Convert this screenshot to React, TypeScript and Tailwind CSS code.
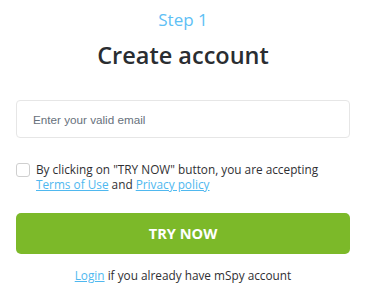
import { useState } from "react";

export default function App() {
  const [email, setEmail] = useState("");
  const [agree, setAgree] = useState(false);

  return (
    <div className="w-[367px] h-[303px] bg-white pl-4 pr-[17px] pt-2 flex flex-col font-['Open_Sans',sans-serif]">
      <p className="text-center text-[17px] leading-[24px] text-[#5ec0f5]">Step 1</p>
      <h1 className="mt-[7px] text-center text-[23.5px] leading-[32px] font-semibold text-[#2a2d31]">
        Create account
      </h1>

      <input
        type="email"
        value={email}
        onChange={(e) => setEmail(e.target.value)}
        placeholder="Enter your valid email"
        className="mt-[29px] h-[38px] w-full rounded border border-[#e6e6e6] px-4 text-[11.7px] font-['Liberation_Sans',Arial,sans-serif] text-[#333] placeholder:text-[#67717c] outline-none"
      />

      <label className="mt-[24px] flex items-start gap-[6px] cursor-pointer">
        <input
          type="checkbox"
          checked={agree}
          onChange={(e) => setAgree(e.target.checked)}
          className="mt-[1px] h-[14px] w-[14px] shrink-0 appearance-none rounded-[3px] border border-[#cfcfcf] bg-white checked:bg-[#7bb92a]"
        />
        <span className="text-[11.8px] leading-[15px] text-[#2f2f33]">
          By clicking on "TRY NOW" button, you are accepting
          <br />
          <a href="#" className="text-[#4fb8ef] underline">Terms of Use</a> and{" "}
          <a href="#" className="text-[#4fb8ef] underline">Privacy policy</a>
        </span>
      </label>

      <button
        type="button"
        className="mt-[21px] h-[41px] w-full rounded-[5px] bg-[#7cb929] text-[14.6px] font-bold text-white hover:bg-[#6fa823]"
      >
        TRY NOW
      </button>

      <p className="mt-[12px] text-center text-[11.8px] leading-[18px] text-[#2f2f33]">
        <a href="#" className="text-[#4fb8ef] underline">Login</a> if you already have mSpy account
      </p>
    </div>
  );
}
